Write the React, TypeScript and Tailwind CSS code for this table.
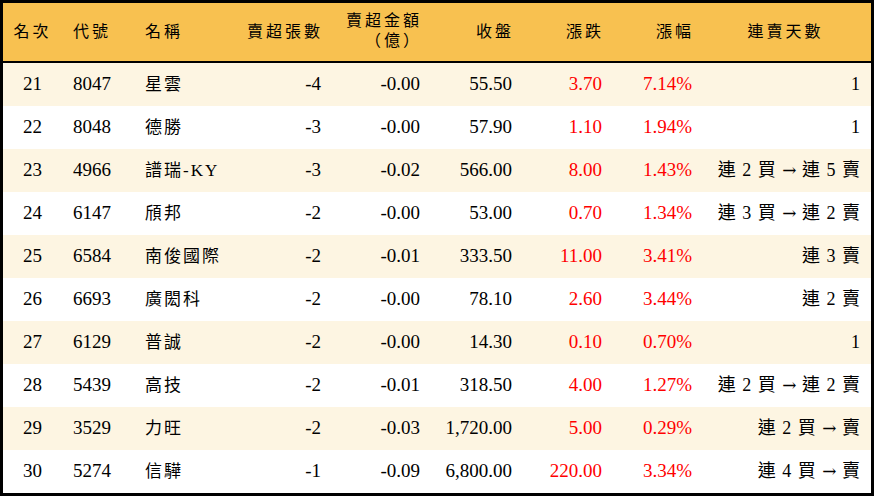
const rows = [
  { rank: 21, code: "8047", name: "星雲", lots: "-4", amt: "-0.00", close: "55.50", chg: "3.70", pct: "7.14%", days: "1" },
  { rank: 22, code: "8048", name: "德勝", lots: "-3", amt: "-0.00", close: "57.90", chg: "1.10", pct: "1.94%", days: "1" },
  { rank: 23, code: "4966", name: "譜瑞-KY", lots: "-3", amt: "-0.02", close: "566.00", chg: "8.00", pct: "1.43%", days: "連 2 買 → 連 5 賣" },
  { rank: 24, code: "6147", name: "頎邦", lots: "-2", amt: "-0.00", close: "53.00", chg: "0.70", pct: "1.34%", days: "連 3 買 → 連 2 賣" },
  { rank: 25, code: "6584", name: "南俊國際", lots: "-2", amt: "-0.01", close: "333.50", chg: "11.00", pct: "3.41%", days: "連 3 賣" },
  { rank: 26, code: "6693", name: "廣閎科", lots: "-2", amt: "-0.00", close: "78.10", chg: "2.60", pct: "3.44%", days: "連 2 賣" },
  { rank: 27, code: "6129", name: "普誠", lots: "-2", amt: "-0.00", close: "14.30", chg: "0.10", pct: "0.70%", days: "1" },
  { rank: 28, code: "5439", name: "高技", lots: "-2", amt: "-0.01", close: "318.50", chg: "4.00", pct: "1.27%", days: "連 2 買 → 連 2 賣" },
  { rank: 29, code: "3529", name: "力旺", lots: "-2", amt: "-0.03", close: "1,720.00", chg: "5.00", pct: "0.29%", days: "連 2 買 → 賣" },
  { rank: 30, code: "5274", name: "信驊", lots: "-1", amt: "-0.09", close: "6,800.00", chg: "220.00", pct: "3.34%", days: "連 4 買 → 賣" },
];

const cols = "grid grid-cols-[57px_75px_105px_91px_99px_92px_90px_90px_169px]";

function Days({ text }: { text: string }) {
  const parts = text.split("→");
  if (parts.length === 1) return <>{text}</>;
  return (
    <>
      {parts[0]}
      <span className="font-['DejaVu_Serif'] text-[17px] tracking-normal">→</span>
      {parts[1]}
    </>
  );
}

export default function App() {
  return (
    <div
      className="w-[874px] h-[496px] bg-white border-[3px] border-black text-black overflow-hidden"
      style={{ fontFamily: '"Liberation Serif", "Noto Sans CJK TC", serif' }}
    >
      {/* header */}
      <div className={`${cols} h-[60px] bg-[#f8c150] border-b-2 border-black text-[16px] tracking-[3px] items-center`}>
        <div className="text-center pl-[2px]">名次</div>
        <div className="pl-[13px]">代號</div>
        <div className="pl-[10px]">名稱</div>
        <div className="text-right pr-[8px]">賣超張數</div>
        <div className="text-right pr-[8px] leading-[20px] pb-[2px]">
          賣超金額
          <br />
          （億）
        </div>
        <div className="text-right pr-[8px]">收盤</div>
        <div className="text-right pr-[8px]">漲跌</div>
        <div className="text-right pr-[8px]">漲幅</div>
        <div className="text-center pr-[2px]">連賣天數</div>
      </div>

      {rows.map((r, i) => (
        <div
          key={r.rank}
          className={`${cols} h-[43px] items-center text-[19px] ${i % 2 === 0 ? "bg-[#fdf5e2]" : "bg-white"}`}
        >
          <div className="text-center pl-[2px]">{r.rank}</div>
          <div className="pl-[13px]">{r.code}</div>
          <div className="pl-[10px] tracking-[2px] text-[17px]">{r.name}</div>
          <div className="text-right pr-[10px]">{r.lots}</div>
          <div className="text-right pr-[10px]">{r.amt}</div>
          <div className="text-right pr-[10px]">{r.close}</div>
          <div className="text-right pr-[10px] text-[#ff0000]">{r.chg}</div>
          <div className="text-right pr-[10px] text-[#ff0000]">{r.pct}</div>
          <div className="text-right pr-[10px] whitespace-pre text-[18px] tracking-[1px]">
            <Days text={r.days} />
          </div>
        </div>
      ))}
    </div>
  );
}
